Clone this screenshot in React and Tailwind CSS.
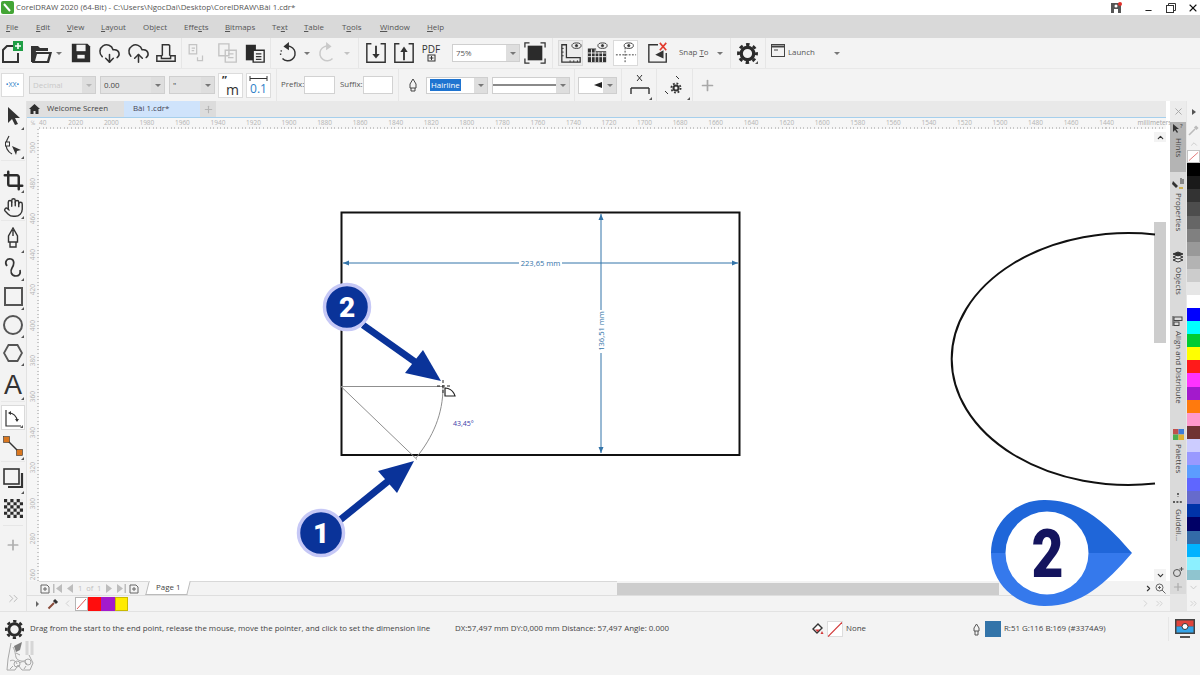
import React from 'react';
import { CloudDownload, CloudUpload, Crop, Hand, Plus, X, ChevronUp, ChevronDown, ChevronRight, ChevronLeft, ChevronsRight, Minus } from 'lucide-react';

const FONT = "font-['Open_Sans','Noto_Sans',sans-serif]";

const MENU = [
  ['F', 'ile', '', 'w-[30px]'], ['E', 'dit', '', 'w-[31px]'], ['V', 'iew', '', 'w-[34px]'], ['L', 'ayout', '', 'w-[42px]'],
  ['', 'Object', '', 'w-[41px]'], ['', 'Effe', 'cts', 'w-[41px]'], ['B', 'itmaps', '', 'w-[47px]'], ['', 'Te', 'xt', 'w-[32px]'],
  ['T', 'able', '', 'w-[38px]'], ['', 'T', 'ools', 'w-[38px]'], ['W', 'indow', '', 'w-[47px]'], ['H', 'elp', '', 'w-[30px]'],
];

const RULER_H = [2020, 2000, 1980, 1960, 1940, 1920, 1900, 1880, 1860, 1840, 1820, 1800, 1780, 1760, 1740, 1720, 1700, 1680, 1660, 1640, 1620, 1600, 1580, 1560, 1540, 1520, 1500, 1480, 1460, 1440];
const RULER_V = [500, 480, 460, 440, 420, 400, 380, 360, 340, 320, 300, 280, 260];

const SWATCHES = [
  'bg-[#000000] h-[13px]', 'bg-[#1a1a1a] h-[13px]', 'bg-[#333333] h-[13px]', 'bg-[#4d4d4d] h-[14px]', 'bg-[#666666] h-[13px]',
  'bg-[#808080] h-[13px]', 'bg-[#999999] h-[14px]', 'bg-[#b3b3b3] h-[13px]', 'bg-[#cccccc] h-[13px]', 'bg-[#e6e6e6] h-[13px]',
  'bg-[#ffffff] h-[13px]', 'bg-[#0000ff] h-[13px]', 'bg-[#00ffff] h-[13px]', 'bg-[#00cc33] h-[13px]', 'bg-[#ffff00] h-[13px]',
  'bg-[#ff1a1a] h-[13px]', 'bg-[#ff33ff] h-[14px]', 'bg-[#a31acc] h-[13px]', 'bg-[#ff7a0d] h-[13px]', 'bg-[#ff99cc] h-[13px]',
  'bg-[#703333] h-[13px]', 'bg-[#ccccff] h-[13px]', 'bg-[#9999ff] h-[13px]', 'bg-[#5c9cff] h-[13px]', 'bg-[#5f66ff] h-[13px]',
  'bg-[#666bcc] h-[13px]', 'bg-[#0033a8] h-[13px]', 'bg-[#000066] h-[14px]', 'bg-[#336ba8] h-[13px]', 'bg-[#00b3ff] h-[13px]',
  'bg-[#8cf0ff] h-[13px]', 'bg-[#8fc4cf] h-[10px]',
];

function Caret({ className = '' }) {
  return <span className={`w-0 h-0 border-x-[3px] border-t-[3px] border-x-transparent border-t-[#777] ${className}`} />;
}

function Corner() {
  return <span className="absolute right-[1px] bottom-[1px] w-0 h-0 border-l-[3px] border-b-[3px] border-l-transparent border-b-[#555]" />;
}

function Cell({ className = '', children }) {
  return <div className={`relative shrink-0 flex items-center justify-center ${className}`}>{children}</div>;
}

function Sep({ className = '' }) {
  return <div className={`shrink-0 w-px h-full bg-[#e6e6e6] ${className}`} />;
}

function Svg({ s = 22, children, className = '' }) {
  return (
    <svg width={s} height={s} viewBox="0 0 24 24" fill="none" stroke="#333" strokeWidth="2" className={className}>
      {children}
    </svg>
  );
}

function Gear({ s = 24, c = '#2b2b2b' }) {
  return (
    <svg width={s} height={s} viewBox="0 0 24 24" fill="none" stroke={c}>
      <circle cx="12" cy="12" r="6.5" strokeWidth="3.4" />
      <circle cx="12" cy="12" r="9.4" strokeWidth="3" strokeDasharray="3.7 3.68" strokeDashoffset="1.8" />
    </svg>
  );
}

function Eye({ x = 13 }) {
  return (
    <g strokeWidth="1">
      <ellipse cx={x + 5} cy="4" rx="5" ry="3" />
      <circle cx={x + 5} cy="4" r="1.2" fill="#333" />
    </g>
  );
}

function Combo({ text, className = '', textClass = '', bg = 'bg-white', caret = '' }) {
  return (
    <div className={`shrink-0 flex h-[18px] border border-[#cfcfcf] ${bg} ${className}`}>
      <span className={`flex-1 pl-[3px] text-[7.9px] leading-[16px] ${textClass}`}>{text}</span>
      <span className="w-[13px] bg-[#dedede] flex items-center justify-center"><Caret className={caret} /></span>
    </div>
  );
}

function TopToolbar() {
  return (
    <div className="h-[31px] bg-[#f3f3f3] flex items-center border-b border-[#e8e8e8]">
      <Cell className="w-[24px]">
        <Svg s={24}>
          <path d="M13 5H7L3 9v12h15v-9" />
          <rect x="13" y="0" width="10" height="10" fill="#1f9e45" stroke="none" />
          <path d="M18 2v6M15 5h6" stroke="#fff" strokeWidth="1.6" />
        </Svg>
      </Cell>
      <Cell className="w-[24px] ml-[5px]">
        <Svg s={24}>
          <path d="M2 5h7l2 2h8v3H7L4 21H2z" fill="#333" stroke="none" />
          <path d="M6 11h17l-3 11H3z" fill="#333" stroke="none" />
          <path d="M8 13h12l-2 7H6z" fill="#f3f3f3" stroke="none" />
        </Svg>
      </Cell>
      <Cell className="w-[12px]"><Caret /></Cell>
      <Cell className="w-[24px] ml-[4px]">
        <Svg s={22}>
          <path d="M2 2h17l3 3v17H2z" fill="#2b2b2b" stroke="none" />
          <rect x="7" y="3" width="10" height="7" fill="#f3f3f3" stroke="none" />
          <rect x="8" y="14" width="8" height="4" fill="#f3f3f3" stroke="none" />
        </Svg>
      </Cell>
      <Cell className="w-[24px] ml-[4px]"><CloudDownload size={23} color="#333" strokeWidth={1.6} /></Cell>
      <Cell className="w-[24px] ml-[5px]"><CloudUpload size={23} color="#333" strokeWidth={1.6} /></Cell>
      <Cell className="w-[24px] ml-[4px]">
        <Svg s={22} >
          <path d="M8 15V3h7l1 1v11" strokeWidth="1.6" />
          <path d="M2 15h5v3h10v-3h5v6H2z" strokeWidth="1.6" />
        </Svg>
      </Cell>
      <Sep className="ml-[3px]" />
      <Cell className="w-[24px] ml-px">
        <Svg s={20}>
          <path d="M5 2h9v11H5zM8 6h4M8 9h3" stroke="#c4c4c4" strokeWidth="1.5" />
          <path d="M15 17v4h6v-6" stroke="#c4c4c4" strokeWidth="1.5" />
        </Svg>
      </Cell>
      <Cell className="w-[24px] ml-[9px]">
        <Svg s={22}>
          <path d="M2 2h11v13H2zM9 9h12v13H9zM12 13h6M12 17h6" stroke="#c4c4c4" strokeWidth="1.5" fill="#f3f3f3" />
        </Svg>
      </Cell>
      <Cell className="w-[24px] ml-[3px]">
        <Svg s={22}>
          <path d="M2 3h11v17H2z" fill="#2b2b2b" stroke="none" />
          <path d="M10 9h12v13H10z" fill="#f3f3f3" stroke="#2b2b2b" strokeWidth="1.5" />
          <path d="M13 13h6M13 16h6M13 19h6" strokeWidth="1.2" />
        </Svg>
      </Cell>
      <Sep className="ml-[3px]" />
      <Cell className="w-[24px] ml-[5px]">
        <Svg s={22}>
          <path d="M9 5a8 8 0 1 1-3 13" strokeWidth="1.6" />
          <path d="M4 14a8 8 0 0 1 1-5" strokeWidth="1.6" strokeDasharray="1.5 2" />
          <path d="M13 0 7 5l6 4z" fill="#333" stroke="none" />
        </Svg>
      </Cell>
      <Cell className="w-[12px] ml-px"><Caret /></Cell>
      <Cell className="w-[24px] ml-[2px]">
        <Svg s={22}>
          <path d="M15 5a8 8 0 1 0 3 13" stroke="#c9c9c9" strokeWidth="1.6" />
          <path d="M11 0l6 5-6 4z" fill="#c9c9c9" stroke="none" />
        </Svg>
      </Cell>
      <Cell className="w-[12px] ml-[2px]"><Caret className="opacity-40" /></Cell>
      <Sep className="ml-[5px]" />
      <Cell className="w-[24px] ml-[5px]">
        <Svg s={22}>
          <path d="M7 2H2v20h20V2h-5" strokeWidth="1.6" />
          <path d="M12 4v12" strokeWidth="2" />
          <path d="M8 13h8l-4 5z" fill="#333" stroke="none" />
        </Svg>
      </Cell>
      <Cell className="w-[24px] ml-[4px]">
        <Svg s={22}>
          <path d="M7 2H2v20h20V2h-5" strokeWidth="1.6" />
          <path d="M12 9v11" strokeWidth="2" />
          <path d="M8 11h8l-4-6z" fill="#333" stroke="none" />
        </Svg>
      </Cell>
      <Cell className="w-[24px] ml-[3px] flex-col">
        <span className="text-[10px] leading-[10px] text-[#333]">PDF</span>
        <svg width="9" height="8" viewBox="0 0 9 8" fill="none" stroke="#333"><rect x="1" y="1" width="7" height="6" /><path d="M4.5 2v4M2.5 4h4" /></svg>
      </Cell>
      <Combo text="75%" className="w-[68px] ml-[9px]" textClass="text-[#555]" />
      <Cell className="w-[24px] ml-[3px]">
        <Svg s={22}>
          <rect x="4" y="4" width="16" height="16" fill="#2b2b2b" stroke="none" />
          <path d="M1 6V1h5M18 1h5v5M23 18v5h-5M6 23H1v-5" strokeWidth="1.4" />
        </Svg>
      </Cell>
      <Sep className="ml-[5px]" />
      <Cell className="w-[25px] h-[26px] ml-[5px] bg-[#ececec] border border-[#dadada]">
        <Svg s={22}>
          <path d="M2 3h5v14h15v5H2z" strokeWidth="1.4" />
          <path d="M2 7h2M2 11h2M2 15h2M11 22v-2M15 22v-2M19 22v-2" strokeWidth="1" />
          <Eye />
        </Svg>
      </Cell>
      <Cell className="w-[24px] ml-[2px]">
        <Svg s={22}>
          <path d="M2 7h9v3h11v12H2z" fill="#333" stroke="none" />
          <path d="M2 12h20M2 16h20M6 8v14M10 8v14M14 11v11M18 11v11" stroke="#f3f3f3" strokeWidth="1" />
          <Eye />
        </Svg>
      </Cell>
      <Cell className="w-[25px] h-[26px] ml-[4px] bg-white border border-[#dadada]">
        <Svg s={22}>
          <path d="M11 6v17M1 14h22" strokeWidth="1" strokeDasharray="2 1.5" />
          <Eye x={10} />
        </Svg>
      </Cell>
      <Cell className="w-[24px] ml-[8px]">
        <Svg s={22}>
          <path d="M12 3H2v19h19V12" strokeWidth="1.5" />
          <path d="M18 9v9l-9-4z" fill="#333" stroke="none" />
          <path d="M14 1l7 8M21 1l-7 8" stroke="#e23b2e" strokeWidth="1.8" />
        </Svg>
      </Cell>
      <span className="shrink-0 ml-[9px] w-[36px] text-[7.9px] text-[#555]">Snap <u>T</u>o</span>
      <Caret className="ml-[2px]" />
      <Sep className="ml-[7px]" />
      <Cell className="w-[24px] ml-[4px]"><Gear s={23} /><Corner /></Cell>
      <Sep className="ml-[6px]" />
      <Cell className="w-[16px] ml-[4px] -mt-[5px]">
        <svg width="14" height="13" viewBox="0 0 14 13" fill="none" stroke="#444"><rect x=".5" y=".5" width="13" height="12" /><path d="M1 2.5h12" strokeWidth="2" /><path d="M3 6h4" /></svg>
      </Cell>
      <span className="shrink-0 ml-[2px] w-[46px] text-[7.9px] text-[#555]">Launch</span>
      <Caret />
    </div>
  );
}

function PropertyBar() {
  return (
    <div className="h-[32px] bg-[#f3f3f3] flex items-center">
      <div className="shrink-0 w-[23px] h-[24px] ml-px bg-white border border-[#dcdcdc] text-center text-[7px] leading-[22px] text-[#2f80c8]">•XX•</div>
      <Combo text="Decimal" className="w-[67px] ml-[5px]" bg="bg-[#ececec]" textClass="text-[#c8c8c8]" caret="opacity-40" />
      <Combo text="0.00" className="w-[65px] ml-[4px]" bg="bg-[#e3e3e3]" textClass="text-[#444]" />
      <Combo text={'"'} className="w-[46px] ml-[4px]" bg="bg-[#e3e3e3]" textClass="text-[#444]" />
      <div className="shrink-0 relative w-[25px] h-[25px] ml-[3px] bg-white border border-[#dcdcdc]">
        <span className="absolute left-[3px] top-[-2px] text-[11px] font-bold text-[#333]">”</span>
        <span className="absolute right-[3px] bottom-[-1px] text-[14px] leading-[16px] text-[#333]">m</span>
      </div>
      <div className="shrink-0 flex flex-col items-center w-[25px] h-[25px] ml-[3px] bg-white border border-[#dcdcdc]">
        <svg width="19" height="7" viewBox="0 0 19 7" fill="none" stroke="#333" className="mt-px"><path d="M1 1v5M18 1v5M1 3.5h17" /></svg>
        <span className="text-[12px] leading-[14px] text-[#2f80c8]">0.1</span>
      </div>
      <Sep className="ml-[5px]" />
      <span className="shrink-0 ml-[4px] w-[23px] text-[7.9px] text-[#555]">Prefix:</span>
      <div className="shrink-0 w-[31px] h-[18px] bg-white border border-[#d2d2d2]" />
      <span className="shrink-0 ml-[5px] w-[23px] text-[7.9px] text-[#555]">Suffix:</span>
      <div className="shrink-0 w-[30px] h-[18px] bg-white border border-[#d2d2d2]" />
      <Sep className="ml-[5px]" />
      <Cell className="w-[14px] ml-[7px]">
        <svg width="8" height="14" viewBox="0 0 8 14" fill="#f3f3f3" stroke="#444"><path d="M4 1 1 6v4h6V6zM2 10v3h4v-3" /></svg>
      </Cell>
      <div className="shrink-0 flex w-[62px] h-[17px] ml-[6px] border border-[#cfcfcf] bg-white">
        <span className="flex-1 pl-[3px] flex items-center"><span className="bg-[#1f74d0] text-white text-[7.9px] leading-[12px] px-px">Hairline</span></span>
        <span className="w-[13px] bg-[#dedede] flex items-center justify-center"><Caret /></span>
      </div>
      <div className="shrink-0 flex w-[78px] h-[17px] ml-[4px] border border-[#cfcfcf] bg-white">
        <span className="flex-1 flex items-center"><span className="w-full h-[2px] bg-[#8a8a8a]" /></span>
        <span className="w-[13px] bg-[#dedede] flex items-center justify-center"><Caret /></span>
      </div>
      <Sep className="ml-[4px]" />
      <div className="shrink-0 flex w-[39px] h-[17px] ml-[3px] border border-[#cfcfcf] bg-white">
        <span className="flex-1 flex items-center justify-end pr-[1px]">
          <svg width="8" height="6" viewBox="0 0 8 6"><path d="M0 3 8 0v6z" fill="#222" /></svg>
        </span>
        <span className="w-[13px] bg-[#dedede] flex items-center justify-center"><Caret /></span>
      </div>
      <Sep className="ml-[4px]" />
      <Cell className="w-[27px] h-full ml-[4px]">
        <svg width="22" height="22" viewBox="0 0 22 22" fill="none" stroke="#333"><path d="M8 1l5 6M13 1 8 7" /><path d="M2 14v6M20 14v6M2 14h18" strokeWidth="1.4" /></svg>
        <Corner />
      </Cell>
      <Sep className="ml-[3px]" />
      <Cell className="w-[30px] h-full ml-[4px]">
        <svg width="24" height="22" viewBox="0 0 24 22" fill="none" stroke="#333">
          <path d="M12 2l3 3M1 17l3 3" />
          <circle cx="12" cy="14" r="2.5" strokeWidth="2" />
          <circle cx="12" cy="14" r="4.6" strokeWidth="1.8" strokeDasharray="1.8 1.8" />
        </svg>
        <Corner />
      </Cell>
      <Sep className="ml-[1px]" />
      <Cell className="w-[24px] ml-[2px]"><Plus size={17} color="#a8a8a8" strokeWidth={2.4} /></Cell>
    </div>
  );
}

function Tool({ className = 'h-[28px]', corner = true, children }) {
  return (
    <Cell className={`w-[24px] ml-px ${className}`}>
      {children}
      {corner && <Corner />}
    </Cell>
  );
}

function Toolbox() {
  return (
    <div className="w-[27px] shrink-0 bg-[#f3f3f3] border-r border-[#e2e2e2] flex flex-col">
      <Tool className="h-[30px]">
        <svg width="15" height="20" viewBox="0 0 15 20"><path d="M2 1v16l4-4 3 6 3-1-3-6h5z" fill="#333" /></svg>
      </Tool>
      <Tool className="h-[30px] border-b border-[#e8e8e8]">
        <svg width="20" height="22" viewBox="0 0 20 22" fill="none" stroke="#333"><path d="M6 1C3 6 2 10 4 14c1 2 3 4 5 5" strokeWidth="1.2" /><rect x="2.5" y="7" width="4" height="4" fill="#f3f3f3" /><path d="M9 11l9 4-4 1-1 4z" fill="#333" stroke="none" /></svg>
      </Tool>
      <Tool className="h-[33px] pt-[5px]"><Crop size={21} color="#2b2b2b" strokeWidth={2.8} /></Tool>
      <Tool className="h-[27px] border-b border-[#e8e8e8]"><Hand size={21} color="#333" strokeWidth={1.6} /></Tool>
      <Tool className="h-[33px]">
        <svg width="12" height="21" viewBox="0 0 12 21" fill="#f3f3f3" stroke="#333" strokeWidth="1.4"><path d="M6 1 1.5 9v6h9V9zM3 15v5h6v-5M6 3v6" /></svg>
      </Tool>
      <Tool className="h-[28px]">
        <svg width="22" height="22" viewBox="0 0 22 22" fill="none" stroke="#333" strokeWidth="1.7"><path d="M5 9C2 5 5 1 9 2c4 1 3 6 1 9-2 3-1 8 4 8 3 0 5-2 4-6" /></svg>
      </Tool>
      <Tool className="h-[29px]"><div className="w-[19px] h-[19px] border-2 border-[#555]" /></Tool>
      <Tool className="h-[28px]"><div className="w-[20px] h-[20px] border-2 border-[#555] rounded-full" /></Tool>
      <Tool className="h-[28px]">
        <svg width="20" height="20" viewBox="0 0 20 20" fill="none" stroke="#555" strokeWidth="1.8"><path d="M5.5 2h9l4.5 8-4.5 8h-9L1 10z" /></svg>
      </Tool>
      <Tool className="h-[35px] pt-[2px] border-b border-[#e8e8e8]"><span className="text-[27px] leading-[30px] text-[#333] font-['Liberation_Sans',sans-serif]">A</span></Tool>
      <Cell className="w-[24px] h-[25px] ml-px mt-[3px] bg-white border border-[#dadada]">
        <svg width="16" height="18" viewBox="0 0 16 18" fill="none" stroke="#333" strokeWidth="1.2"><path d="M1 1v16h15" /><path d="M4 4c4 0 8 3 8 8" /><path d="M3 4l3-2v4zM12 13l-2-3h4z" fill="#333" stroke="none" /></svg>
        <Corner />
      </Cell>
      <Tool className="h-[32px] border-b border-[#e8e8e8]">
        <svg width="22" height="22" viewBox="0 0 22 22"><path d="M5 5l12 12" stroke="#333" strokeWidth="1.4" /><rect x="1.5" y="1.5" width="6" height="6" fill="#d9761e" stroke="#333" strokeWidth=".6" /><rect x="14.5" y="14.5" width="6" height="6" fill="#d9761e" stroke="#333" strokeWidth=".6" /></svg>
      </Tool>
      <Tool className="h-[33px]">
        <svg width="21" height="21" viewBox="0 0 21 21" fill="none" stroke="#333"><rect x="1" y="1" width="15" height="15" strokeWidth="1.6" /><path d="M19 5v14H5" strokeWidth="2.2" /></svg>
      </Tool>
      <Tool className="h-[27px]" corner={false}>
        <svg width="19" height="19" viewBox="0 0 6 6"><rect width="6" height="6" fill="#2b2b2b" /><path d="M1 0h1v1H1zM3 0h1v1H3zM5 0h1v1H5zM0 1h1v1H0zM2 1h1v1H2zM4 1h1v1H4zM1 2h1v1H1zM3 2h1v1H3zM5 2h1v1H5zM0 3h1v1H0zM2 3h1v1H2zM4 3h1v1H4zM1 4h1v1H1zM3 4h1v1H3zM5 4h1v1H5zM0 5h1v1H0zM2 5h1v1H2zM4 5h1v1H4z" fill="#eee" /></svg>
      </Tool>
      <div className="mt-[3px] mx-[3px] h-px bg-[#e6e6e6]" />
      <Tool className="h-[37px]" corner={false}><Plus size={16} color="#b0b0b0" strokeWidth={2.6} /></Tool>
      <div className="flex-1" />
      <Cell className="w-[24px] h-[26px] ml-px"><ChevronsRight size={15} color="#bbb" strokeWidth={1.6} /></Cell>
    </div>
  );
}

function PageBar() {
  return (
    <div className="h-[15px] flex items-end bg-[#f3f3f3] border-b border-[#dedede] pl-[12px]">
      <div className="w-[109px] shrink-0 h-full flex items-center text-[#aaa] border-t border-[#d8d8d8]">
        <svg width="10" height="10" viewBox="0 0 10 10" fill="none" stroke="#666" className="ml-[1px]"><path d="M1 1h6l2 2v6H1zM5 3v4M3 5h4" /></svg>
        <svg width="10" height="9" viewBox="0 0 10 9" fill="#bdbdbd" className="ml-[3px]"><path d="M0 0h1.5v9H0zM9 0v9L3 4.5z" /></svg>
        <svg width="8" height="9" viewBox="0 0 8 9" fill="#bdbdbd" className="ml-[3px]"><path d="M7 0v9L1 4.5z" /></svg>
        <span className="ml-[4px] text-[7.5px] text-[#c0c0c0] whitespace-nowrap">1&nbsp; of&nbsp; 1</span>
        <svg width="8" height="9" viewBox="0 0 8 9" fill="#bdbdbd" className="ml-[4px]"><path d="M1 0v9l6-4.5z" /></svg>
        <svg width="10" height="9" viewBox="0 0 10 9" fill="#bdbdbd" className="ml-[3px]"><path d="M8.5 0H10v9H8.5zM1 0v9l6-4.5z" /></svg>
        <svg width="10" height="10" viewBox="0 0 10 10" fill="none" stroke="#666" className="ml-[3px]"><path d="M1 1h6l2 2v6H1zM5 3v4M3 5h4" /></svg>
      </div>
      <div className="shrink-0 w-[42px] h-full ml-[-1px] bg-white border-x border-b border-[#bbb] skew-x-[-14deg] flex items-center justify-center">
        <span className="skew-x-[14deg] text-[7.9px] leading-none text-[#444]">Page 1</span>
      </div>
      <div className="shrink-0 w-[428px] h-full border-t border-[#d8d8d8]" />
      <div className="shrink-0 w-[382px] h-[12px] self-end bg-[#cdcdcd]" />
      <div className="flex-1" />
      <Cell className="w-[12px] h-full"><ChevronRight size={9} color="#333" strokeWidth={3} /></Cell>
      <Cell className="w-[12px] h-full mr-[4px]">
        <svg width="11" height="11" viewBox="0 0 11 11" fill="none" stroke="#666"><circle cx="4.5" cy="4.5" r="3.5" /><path d="M7 7l3.5 3.5M3 4.5h3M4.5 3v3" /></svg>
      </Cell>
    </div>
  );
}

function DocPalette() {
  return (
    <div className="h-[15px] flex items-center bg-[#f3f3f3] pl-[9px]">
      <span className="w-0 h-0 border-y-[3px] border-l-[3px] border-y-transparent border-l-[#666]" />
      <svg width="12" height="12" viewBox="0 0 12 12" className="ml-[8px]" fill="none"><path d="M1.5 10.5 7 5" stroke="#8a4b3a" strokeWidth="2" /><path d="M7 2l3 3" stroke="#333" strokeWidth="3" /></svg>
      <ChevronLeft size={11} color="#cfcfcf" strokeWidth={2} className="ml-[3px]" />
      <div className="shrink-0 w-[13px] h-[14px] ml-[2px] bg-white border border-[#b5b5b5] flex items-center justify-center">
        <svg width="11" height="12" viewBox="0 0 11 12"><path d="M1 11 10 1" stroke="#e05a5a" /></svg>
      </div>
      <div className="shrink-0 w-[13px] h-[14px] bg-[#ff0d0d]" />
      <div className="shrink-0 w-[14px] h-[14px] bg-[#a31acc]" />
      <div className="shrink-0 w-[13px] h-[14px] bg-[#ffeb00] border border-[#c9b900]" />
      <div className="flex-1" />
      <ChevronRight size={11} color="#d0d0d0" strokeWidth={2} />
      <ChevronsRight size={11} color="#d0d0d0" strokeWidth={2} className="ml-[3px] mr-[5px]" />
    </div>
  );
}

function CenterArea() {
  return (
    <div className="flex-1 min-w-0 flex flex-col bg-white">
      <div className="h-[16px] flex bg-[#e9e9e9] mr-[4px]">
        <div className="w-[97px] shrink-0 bg-[#dfdfdf] flex items-center">
          <svg width="11" height="10" viewBox="0 0 11 10" className="ml-[2px]"><path d="M5.5 0 11 5H9.5v5H6.5V7h-2v3h-3V5H0z" fill="#2f2f2f" /></svg>
          <span className="ml-[7px] text-[7.9px] leading-none text-[#444]">Welcome Screen</span>
        </div>
        <div className="w-[76px] shrink-0 bg-[#cfe3fb] flex items-center pl-[9px] text-[7.9px] text-[#445]">Bài 1.cdr*</div>
        <div className="w-[16px] shrink-0 bg-[#dcdcdc] flex items-center justify-center"><Plus size={11} color="#b5b5b5" strokeWidth={2.4} /></div>
      </div>
      <div className="h-[12px] flex mr-[4px] bg-[#f6f6f6] border-t border-[#a6cfec] relative">
        <span className="w-[12px] shrink-0 text-[6px] leading-[10px] text-[#aaa] text-center">℅</span>
        <span className="w-[19px] shrink-0 text-[6.5px] leading-[9px] text-[#b4b4b4]">40</span>
        {RULER_H.map(n => (
          <span key={n} className="w-[35.55px] shrink-0 text-center text-[6.5px] leading-[9px] text-[#b4b4b4]">{n}</span>
        ))}
        <span className="ml-[13px] text-[6.5px] leading-[9px] text-[#a5a5a5]">millimeters</span>
        <span className="absolute left-[12px] right-0 bottom-0 h-[2px] bg-[repeating-linear-gradient(90deg,#c8c8c8_0,#c8c8c8_1px,transparent_1px,transparent_3.555px)]" />
      </div>
      <div className="flex-1 min-h-0 flex">
        <div className="w-[12px] shrink-0 bg-[#f6f6f6] relative overflow-hidden pt-px">
          {RULER_V.map(n => (
            <div key={n} className="h-[35.55px] flex items-center justify-center">
              <span className="[writing-mode:vertical-rl] rotate-180 text-[6.5px] leading-none text-[#b4b4b4]">{n}</span>
            </div>
          ))}
          <span className="absolute top-0 bottom-0 right-0 w-[2px] bg-[repeating-linear-gradient(180deg,#c8c8c8_0,#c8c8c8_1px,transparent_1px,transparent_3.555px)]" />
        </div>
        <div className="flex-1" />
        <div className="w-[12px] shrink-0 mr-[4px] flex flex-col">
          <Cell className="h-[10px] mt-[3px] bg-[#f3f3f3]"><ChevronUp size={9} color="#333" strokeWidth={3} /></Cell>
          <div className="h-[80px]" />
          <div className="h-[121px] bg-[#cdcdcd]" />
          <div className="flex-1" />
          <Cell className="h-[12px] bg-[#f3f3f3]"><ChevronDown size={9} color="#333" strokeWidth={3} /></Cell>
        </div>
      </div>
      <PageBar />
      <DocPalette />
    </div>
  );
}

function DockTab({ h, active, label, icon }) {
  return (
    <div className={`shrink-0 flex flex-col items-center ${h} ${active ? 'bg-[#b4b4b4]' : ''}`}>
      <div className="h-[12px] flex items-center">{icon}</div>
      <span className="mt-[4px] [writing-mode:vertical-rl] text-[7.9px] leading-none text-[#444] whitespace-nowrap">{label}</span>
    </div>
  );
}

function Dock() {
  return (
    <div className="w-[16px] shrink-0 bg-[#dadada] flex flex-col">
      <Cell className="h-[21px] bg-[#ececec]"><X size={11} color="#a5a5a5" strokeWidth={2} /></Cell>
      <DockTab h="h-[50px]" active label="Hints" icon={
        <svg width="12" height="12" viewBox="0 0 12 12"><path d="M1 2v8l2-2 2 3 1-1-2-3h3z" fill="#333" /><text x="8" y="6" fontSize="6" fill="#333">?</text></svg>
      } />
      <DockTab h="h-[75px] pt-[5px]" label="Properties" icon={
        <svg width="12" height="12" viewBox="0 0 12 12" fill="none"><path d="M1 4l5 5-2 2-4-4z" fill="#333" /><path d="M7 11h4" stroke="#c9a227" strokeWidth="1.5" /><path d="M9 1v6M11 2v5" stroke="#333" /></svg>
      } />
      <DockTab h="h-[67px] pt-[4px]" label="Objects" icon={
        <svg width="12" height="12" viewBox="0 0 12 12" fill="#eee" stroke="#333"><path d="M6 7 1 9l5 2 5-2z" /><path d="M6 4 1 6l5 2 5-2z" /><path d="M6 1 1 3l5 2 5-2z" fill="#333" /></svg>
      } />
      <DockTab h="h-[110px] pt-[1px]" label="Align and Distribute" icon={
        <svg width="12" height="12" viewBox="0 0 12 12" fill="none" stroke="#444"><path d="M1 1v10" /><rect x="2" y="2" width="8" height="3.5" /><rect x="2" y="7" width="5" height="3.5" /></svg>
      } />
      <DockTab h="h-[66px] pt-[4px]" label="Palettes" icon={
        <svg width="11" height="11" viewBox="0 0 4 4"><path d="M0 0h2v2H0z" fill="#c0504d" /><path d="M2 0h2v2H2z" fill="#3b7dd8" /><path d="M0 2h2v2H0z" fill="#4caf50" /><path d="M2 2h2v2H2z" fill="#e0b030" /></svg>
      } />
      <DockTab h="h-[75px] pt-[3px]" label="Guideli..." icon={
        <svg width="10" height="12" viewBox="0 0 10 12" fill="none" stroke="#333"><path d="M5 0v4M0 9h10" strokeDasharray="2 1.4" strokeWidth="1.4" /></svg>
      } />
      <Cell className="h-[14px]">
        <svg width="12" height="12" viewBox="0 0 12 12" fill="none" stroke="#555"><circle cx="5" cy="7" r="3.5" /><path d="M9.5 1v4M7.5 3h4" /></svg>
      </Cell>
      <Cell className="h-[15px]"><Plus size={12} color="#aaa" strokeWidth={2.4} /></Cell>
      <div className="flex-1 bg-[#e6e6e6]" />
    </div>
  );
}

function Palette() {
  return (
    <div className="w-[14px] shrink-0 bg-[#f3f3f3] flex flex-col border-l border-[#e6e6e6]">
      <Cell className="h-[22px]"><span className="w-0 h-0 border-y-[3px] border-l-[4px] border-y-transparent border-l-[#555]" /></Cell>
      <Cell className="h-[15px]">
        <svg width="11" height="11" viewBox="0 0 11 11" fill="none"><path d="M1 10 7 4" stroke="#bbb" strokeWidth="1.6" /><path d="M7 1.5l2.5 2.5" stroke="#bbb" strokeWidth="3" /></svg>
      </Cell>
      <Cell className="h-[12px]"><ChevronUp size={10} color="#c8c8c8" strokeWidth={2} /></Cell>
      <div className="h-[13px] bg-white border border-[#c4c4c4] flex items-center justify-center">
        <svg width="12" height="11" viewBox="0 0 12 11"><path d="M1 10 11 1" stroke="#e07070" /></svg>
      </div>
      {SWATCHES.map((c, i) => <div key={i} className={c} />)}
      <Cell className="h-[15px]"><ChevronDown size={11} color="#c8c8c8" strokeWidth={2} /></Cell>
      <Cell className="flex-1"><ChevronsRight size={11} color="#d0d0d0" strokeWidth={2} /></Cell>
    </div>
  );
}

function StatusBar() {
  return (
    <div className="h-[64px] bg-[#f3f3f3] border-t border-[#e2e2e2] flex text-[7.9px] text-[#444]">
      <div className="w-[30px] shrink-0 flex flex-col pl-[4px]">
        <div className="h-[24px] mt-[5px] flex items-center"><Gear s={21} /></div>
        <svg width="34" height="34" viewBox="0 0 34 34" fill="none" stroke="#a8a8a8" className="mt-[-2px]">
          <path d="M7 4 4 20l-1 11h8l3-5 4 5h8l3-7-4-8" />
          <path d="M9 8c3 5 2 10 4 12s6 3 9 1M6 22c3-2 6 0 7 3M16 24c2-2 5-2 7 1" />
          <circle cx="13" cy="25" r="3" />
          <circle cx="24" cy="23" r="3" />
          <path d="M10 7l8-4-2 8-4 2z" fill="#7c7c7c" stroke="none" />
          <path d="M23 2v14M28 2v14" stroke="#d6d6d6" strokeWidth="3" />
          <path d="M6 30l3-3M20 30l2-3M12 14l4 2" />
        </svg>
      </div>
      <div className="h-[34px] flex-1 flex items-center min-w-0">
        <span className="shrink-0 w-[425px] whitespace-nowrap">Drag from the start to the end point, release the mouse, move the pointer, and click to set the dimension line</span>
        <span className="shrink-0 w-[357px] whitespace-nowrap">DX:57,497 mm DY:0,000 mm Distance: 57,497 Angle: 0.000</span>
        <svg width="12" height="13" viewBox="0 0 12 13" className="shrink-0" fill="none"><path d="M6 1 1 6l4 4 5-5z" fill="#fff" stroke="#333" strokeWidth="1.4" /><path d="M3 6.5h5L5.5 9z" fill="#d23a3a" /><path d="M10 8l1.5 3h-3z" fill="#d23a3a" /></svg>
        <div className="shrink-0 w-[16px] h-[16px] ml-[3px] bg-white border border-[#ddd] flex items-center justify-center">
          <svg width="15" height="15" viewBox="0 0 15 15"><path d="M0 15 15 0" stroke="#d23a3a" strokeWidth="1.3" /></svg>
        </div>
        <span className="shrink-0 w-[127px] ml-[3px]">None</span>
        <svg width="7" height="13" viewBox="0 0 7 13" fill="#f3f3f3" stroke="#555" className="shrink-0"><path d="M3.5 1 1 5v3h5V5zM2 8v4h3V8" /></svg>
        <div className="shrink-0 w-[16px] h-[16px] ml-[5px] bg-[#3374a9]" />
        <span className="shrink-0 ml-[3px] whitespace-nowrap">R:51 G:116 B:169 (#3374A9)</span>
        <div className="flex-1" />
        <div className="w-px h-[24px] bg-[#e6e6e6]" />
        <svg width="20" height="20" viewBox="0 0 20 20" className="shrink-0 ml-[6px] mr-[5px]">
          <rect x="0" y="0" width="20" height="15" fill="#444" />
          <rect x="1.5" y="1.5" width="17" height="6" fill="#e2453c" />
          <rect x="1.5" y="7.5" width="17" height="6" fill="#35a4e8" />
          <circle cx="10" cy="7.5" r="3" fill="#fff" stroke="#333" />
          <rect x="5" y="17" width="10" height="2" fill="#555" />
        </svg>
      </div>
    </div>
  );
}

function Overlay() {
  const blue = '#3374a9';
  return (
    <svg width="1200" height="675" viewBox="0 0 1200 675" fill="none" className="absolute left-0 top-0 pointer-events-none">
      <rect x="341.5" y="212.5" width="398" height="242.5" stroke="#111" strokeWidth="2" />
      <path d="M343 263h395" stroke={blue} />
      <path d="M343 263l6-2.5v5zM738 263l-6-2.5v5z" fill={blue} />
      <path d="M601 214v239" stroke={blue} />
      <path d="M601 214l-2.5 6h5zM601 453l-2.5-6h5z" fill={blue} />
      <rect x="519" y="258" width="43" height="10" fill="#fff" />
      <text x="540.5" y="266" textAnchor="middle" fontSize="7.6" fill={blue} fontFamily="Open Sans">223,65 mm</text>
      <rect x="596" y="310" width="10" height="43" fill="#fff" />
      <text x="604" y="331" textAnchor="middle" fontSize="7.6" fill={blue} fontFamily="Open Sans" transform="rotate(-90 604 331)">136,51 mm</text>

      <path d="M341 386.5h102M341 386.5l76 73" stroke="#8f8f8f" />
      <path d="M443 387c0 27-10 50-27 71" stroke="#8f8f8f" />
      <path d="M443 380v13M437 386h13" stroke="#222" strokeDasharray="3 2" />
      <path d="M445 396v-8l3 .5c3 1 6 4 7 7.500z" stroke="#222" strokeWidth="1.2" />
      <text x="453" y="426" fontSize="7" fill="#3a3aa8" fontFamily="Open Sans">43,45°</text>

      <path d="M1155 234.400A177 126 0 1 0 1155 483.600" stroke="#111" strokeWidth="2" />

      <path d="M363 325 418 364" stroke="#0a3399" strokeWidth="7" />
      <path d="M441 381 423 350 405 373z" fill="#0a3399" />
      <circle cx="347" cy="307" r="22.500" fill="#0a3399" stroke="#c6c8f6" strokeWidth="3.500" />
      <text x="347" y="317" textAnchor="middle" fontSize="28" fontWeight="900" fill="#fff" fontFamily="Roboto">2</text>

      <path d="M340 520 392 478" stroke="#0a3399" strokeWidth="7" />
      <path d="M414 461 378 471 397 493z" fill="#0a3399" />
      <circle cx="321" cy="533" r="22.500" fill="#0a3399" stroke="#c6c8f6" strokeWidth="3.500" />
      <text x="321" y="543" textAnchor="middle" fontSize="28" fontWeight="900" fill="#fff" fontFamily="Roboto">1</text>

      <path d="M1132 553C1106 523 1082 500 1045 500A53 53 0 0 0 991 553z" fill="#1f66d9" />
      <path d="M1132 553C1106 583 1082 606 1045 606A53 53 0 0 1 991 553z" fill="#3579ec" />
      <circle cx="1047" cy="553" r="41.500" fill="#fff" />
      <text x="1047.500" y="577" textAnchor="middle" fontSize="67" fontWeight="900" fill="#14145e" fontFamily="Roboto" textLength="32" lengthAdjust="spacingAndGlyphs">2</text>
    </svg>
  );
}

export default function App() {
  return (
    <div className={`relative w-[1200px] h-[675px] overflow-hidden bg-[#f3f3f3] ${FONT}`}>
      <div className="h-[15px] bg-white flex items-center">
        <svg width="13" height="13" viewBox="0 0 13 13" className="ml-px shrink-0"><rect width="13" height="13" rx="2" fill="#43a535" /><path d="M3 3l6 7" stroke="#fff" strokeWidth="2" /></svg>
        <span className="ml-[2px] text-[7.9px] text-[#555] whitespace-nowrap">CorelDRAW 2020 (64-Bit) - C:\Users\NgocDai\Desktop\CorelDRAW\Bài 1.cdr*</span>
        <div className="flex-1" />
        <svg width="11" height="11" viewBox="0 0 11 11" className="shrink-0 mr-[5px]"><rect y="1" width="10" height="10" fill="#555" /><path d="M3 11V7h4v4z" fill="#fff" /><circle cx="5" cy="4" r="1.500" fill="#fff" /><circle cx="9" cy="2" r="2" fill="#e0302a" /></svg>
        <Minus size={9} color="#222" strokeWidth={3} className="ml-[17px] mt-[5px] shrink-0" />
        <svg width="10" height="10" viewBox="0 0 10 10" fill="none" stroke="#333" className="ml-[13px] shrink-0"><rect x=".5" y="2.500" width="7" height="7" /><path d="M2.500 2V.5h7v7H8" /></svg>
        <X size={12} color="#111" strokeWidth={2.2} className="ml-[11px] mr-px shrink-0" />
      </div>
      <div className="h-[23px] bg-[#d9d9d9] flex items-center pl-[6px] pt-[3px]">
        {MENU.map(([u, a, b, w]) => (
          <span key={u + a} className={`shrink-0 text-[7.9px] text-[#555] ${w}`}>
            {a === 'T' ? <>T<u>o</u>ols</> : <>{u && <u>{u}</u>}{a}{b === 'cts' && <><u>c</u>ts</>}{b === 'xt' && <u>x</u>}{b === 'xt' && 't'}</>}
          </span>
        ))}
      </div>
      <TopToolbar />
      <PropertyBar />
      <div className="h-[510px] flex">
        <Toolbox />
        <CenterArea />
        <Dock />
        <Palette />
      </div>
      <StatusBar />
      <Overlay />
    </div>
  );
}
